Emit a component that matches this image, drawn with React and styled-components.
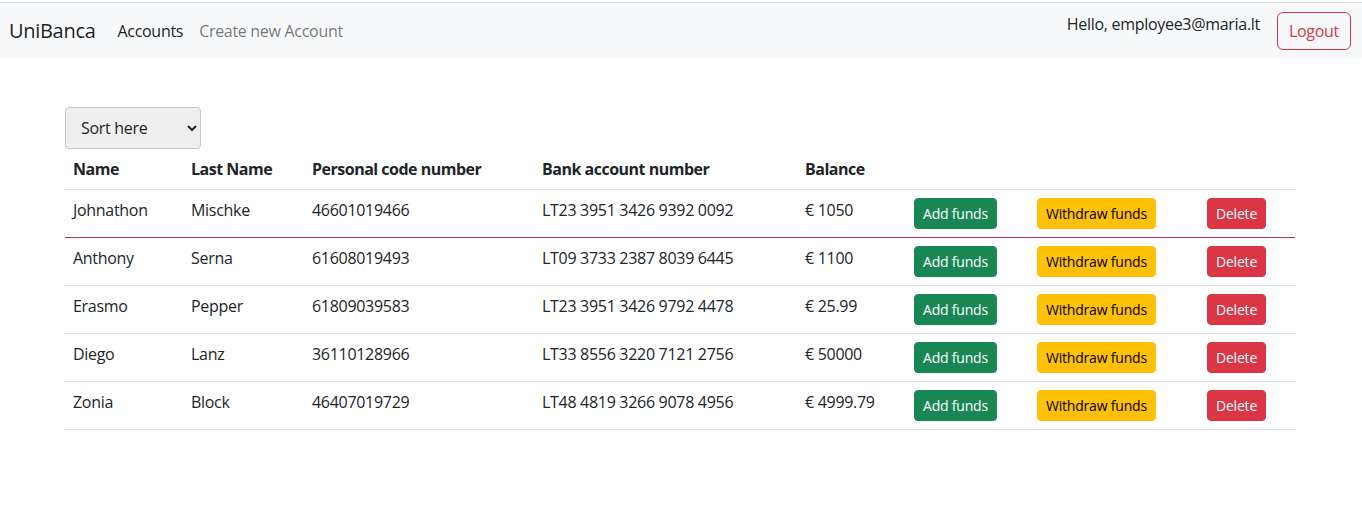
import React from "react";
import styled, {createGlobalStyle} from "styled-components";

const GlobalStyle = createGlobalStyle`
    html, body {
        margin: 0;
        padding: 0;
        background: #fff;
    }
    body {
        font-family: "Open Sans", "Liberation Sans", sans-serif;
        font-size: 16px;
        line-height: 1.5;
        letter-spacing: -0.3px;
        color: #212529;
    }
    * { box-sizing: border-box; }
`;

const accounts = [
    {name: "Johnathon", lastName: "Mischke", code: "46601019466", iban: "LT23 3951 3426 9392 0092", balance: "1050"},
    {name: "Anthony", lastName: "Serna", code: "61608019493", iban: "LT09 3733 2387 8039 6445", balance: "1100"},
    {name: "Erasmo", lastName: "Pepper", code: "61809039583", iban: "LT23 3951 3426 9792 4478", balance: "25.99"},
    {name: "Diego", lastName: "Lanz", code: "36110128966", iban: "LT33 8556 3220 7121 2756", balance: "50000"},
    {name: "Zonia", lastName: "Block", code: "46407019729", iban: "LT48 4819 3266 9078 4956", balance: "4999.79"},
];

const colWidths = [118, 121, 230, 263, 109, 123, 170, 96];

function App() {
    return (
        <>
            <GlobalStyle />
            <Page>
                <Navbar>
                    <Brand>UniBanca</Brand>
                    <NavLinks>
                        <NavLink $active>Accounts</NavLink>
                        <NavLink>Create new Account</NavLink>
                    </NavLinks>
                    <UserBox>
                        <Greeting>Hello, employee3@maria.lt</Greeting>
                        <LogoutButton>Logout</LogoutButton>
                    </UserBox>
                </Navbar>
                <Main>
                    <SortSelect defaultValue="">
                        <option value="">Sort here</option>
                        <option value="name">Name</option>
                        <option value="balance">Balance</option>
                    </SortSelect>
                    <Table>
                        <colgroup>
                            {colWidths.map((w, i) => <col key={i} style={{width: w}} />)}
                        </colgroup>
                        <thead>
                            <tr>
                                <Th>Name</Th>
                                <Th>Last Name</Th>
                                <Th>Personal code number</Th>
                                <Th>Bank account number</Th>
                                <Th>Balance</Th>
                                <Th />
                                <Th />
                                <Th />
                            </tr>
                        </thead>
                        <tbody>
                            {accounts.map((a, i) => {
                                const hl = i === 0;
                                return (
                                    <tr key={a.code}>
                                        <Td $highlight={hl}>{a.name}</Td>
                                        <Td $highlight={hl}>{a.lastName}</Td>
                                        <Td $highlight={hl}>{a.code}</Td>
                                        <Td $highlight={hl}>{a.iban}</Td>
                                        <Td $highlight={hl}>€ {a.balance}</Td>
                                        <Td $highlight={hl}><SmallButton $variant="success">Add funds</SmallButton></Td>
                                        <Td $highlight={hl}><SmallButton $variant="warning">Withdraw funds</SmallButton></Td>
                                        <Td $highlight={hl}><SmallButton $variant="danger">Delete</SmallButton></Td>
                                    </tr>
                                );
                            })}
                        </tbody>
                    </Table>
                </Main>
            </Page>
        </>
    )
}

const Page = styled.div`
    padding-top: 2px;
`;

const Navbar = styled.nav`
    display: flex;
    align-items: center;
    border-top: 1px solid #dee2e6;
    background: #f8f9fa;
    padding: 9px 11px 8px 9px;
    height: 56px;
`;

const Brand = styled.a`
    font-size: 20px;
    line-height: 30px;
    color: rgba(0, 0, 0, 0.9);
    margin-right: 14px;
`;

const NavLinks = styled.div`
    display: flex;
    gap: 16px;
    margin-left: 8px;
`;

const NavLink = styled.a`
    font-size: 16px;
    line-height: 24px;
    color: ${p => p.$active ? "rgba(0, 0, 0, 0.9)" : "rgba(0, 0, 0, 0.55)"};
`;

const UserBox = styled.div`
    margin-left: auto;
    display: flex;
    align-items: flex-start;
    gap: 17px;
`;

const Greeting = styled.span`
    font-size: 16px;
    line-height: 24px;
`;

const LogoutButton = styled.button`
    font-family: inherit;
    font-size: 16px;
    line-height: 24px;
    letter-spacing: inherit;
    padding: 6px 11px;
    color: #dc3545;
    background: transparent;
    border: 1px solid #dc3545;
    border-radius: 6px;
`;

const Main = styled.main`
    width: 1230px;
    margin-left: 65px;
    padding-top: 49px;
`;

const SortSelect = styled.select`
    display: block;
    width: 136px;
    height: 42px;
    font-family: inherit;
    font-size: 16px;
    letter-spacing: inherit;
    color: #212529;
    padding: 0 8px 0 11px;
    background: #efefef;
    border: 1px solid #c6c6c6;
    border-radius: 4px;
`;

const Table = styled.table`
    width: 1230px;
    table-layout: fixed;
    border-collapse: separate;
    border-spacing: 0;
    vertical-align: top;
`;

const Th = styled.th`
    text-align: left;
    font-weight: 700;
    padding: 8px;
    line-height: 24px;
    letter-spacing: -0.5px;
    border-bottom: 1px solid #dee2e6;
`;

const Td = styled.td`
    padding: 8px;
    line-height: 24px;
    vertical-align: top;
    white-space: nowrap;
    border-bottom: 1px solid ${p => p.$highlight ? "#b0306c" : "#dee2e6"};
`;

const variants = {
    success: {bg: "#198754", fg: "#fff"},
    warning: {bg: "#ffc107", fg: "#000"},
    danger: {bg: "#dc3545", fg: "#fff"},
};

const SmallButton = styled.button`
    font-family: inherit;
    font-size: 14px;
    line-height: 21px;
    letter-spacing: -0.2px;
    padding: 4px 8px;
    border: 1px solid ${p => variants[p.$variant].bg};
    border-radius: 4px;
    background: ${p => variants[p.$variant].bg};
    color: ${p => variants[p.$variant].fg};
`;

export default App;
